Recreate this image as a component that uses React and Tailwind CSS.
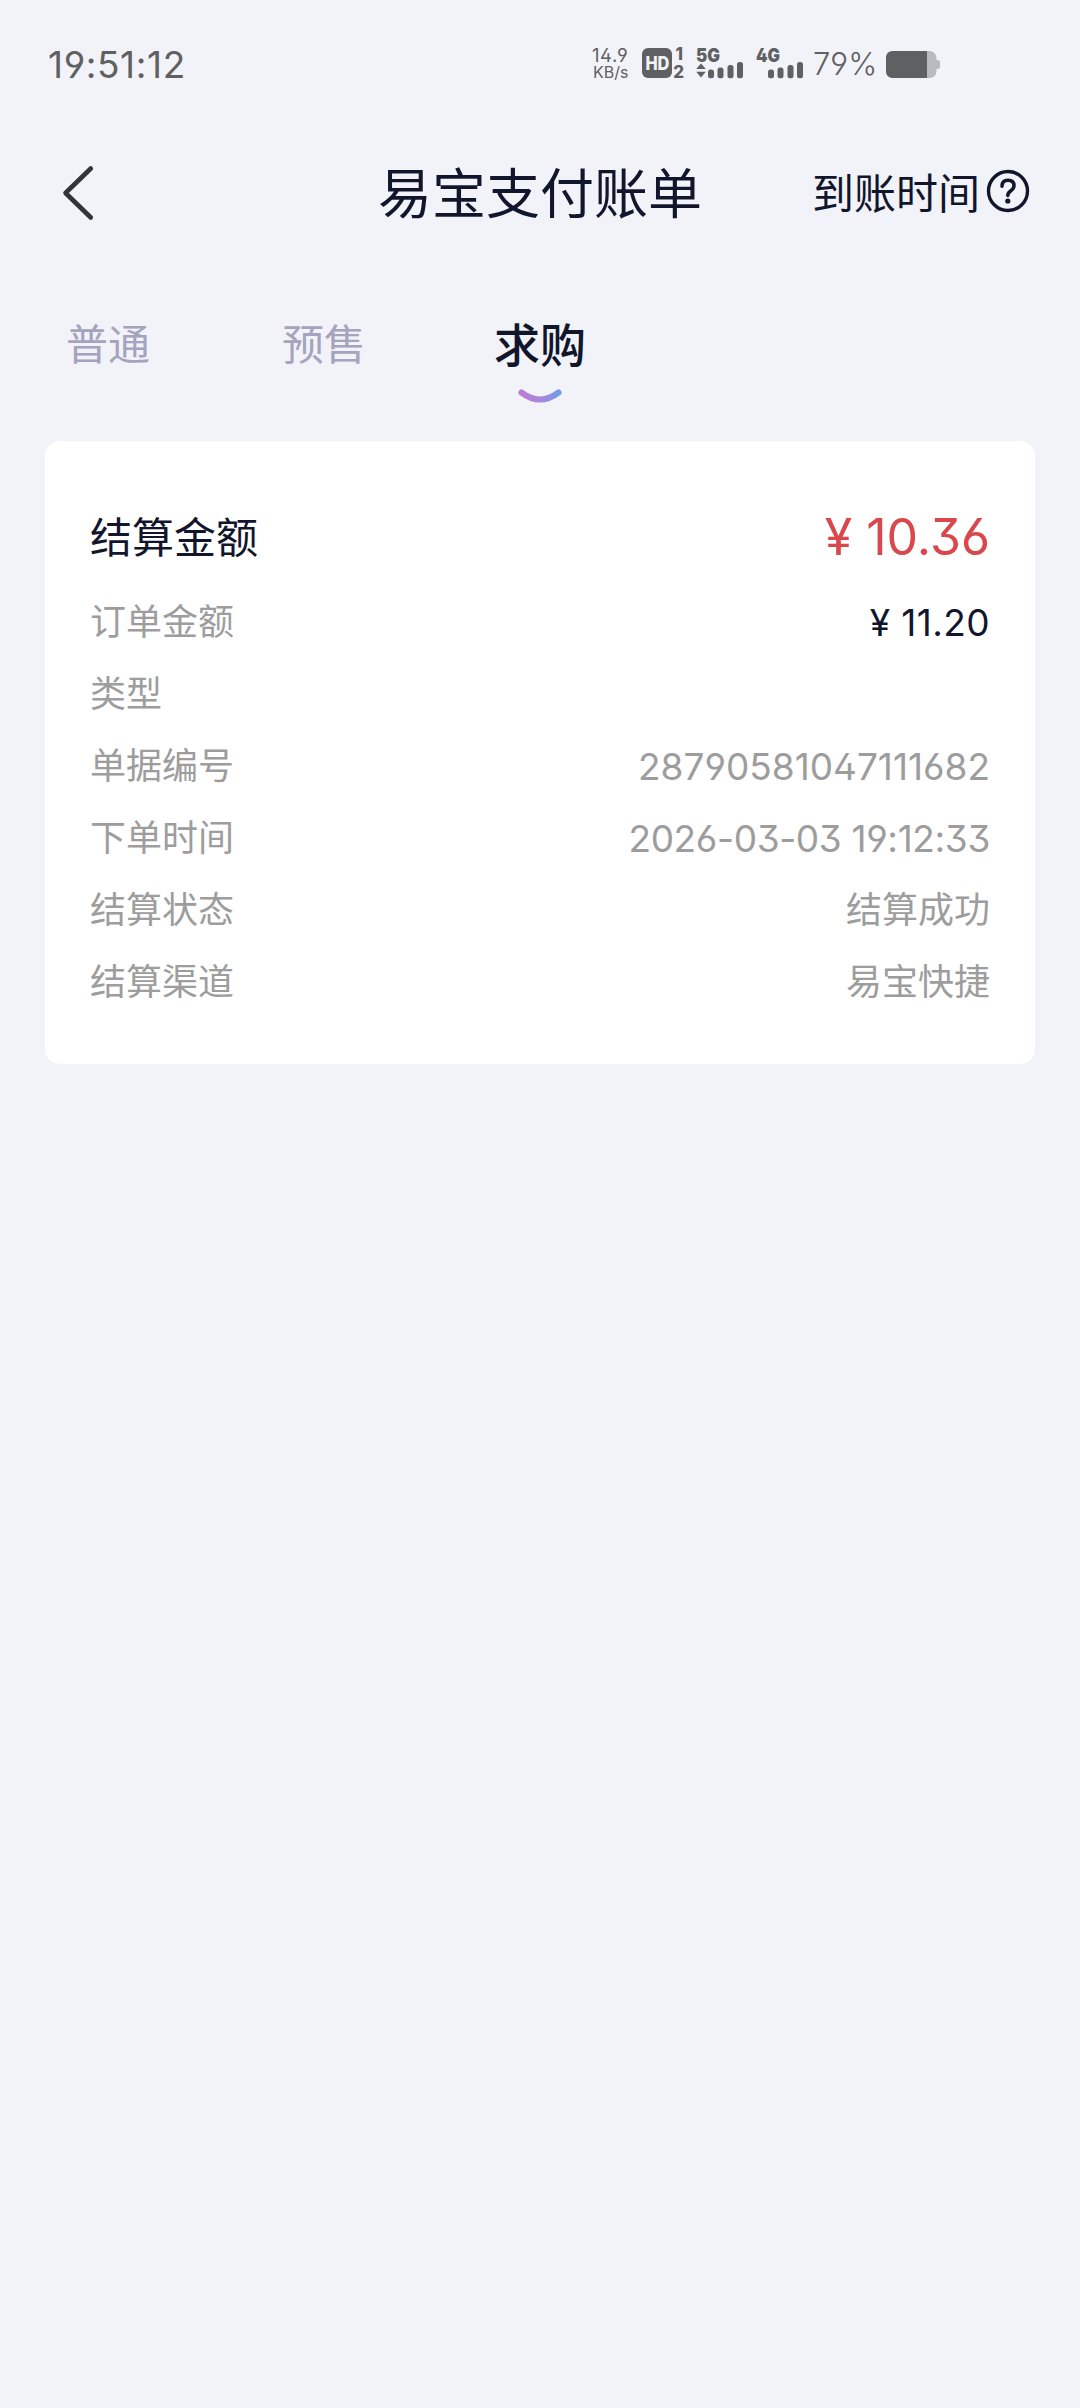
const cjk = "font-['Noto_Sans_CJK_SC',sans-serif]";
const num = "font-['Inter',sans-serif] [font-feature-settings:'ss01']";

function SignalBars({ label, arrows }) {
  return (
    <svg width="49" height="42" viewBox="0 -8 49 42" fill="#5f6062">
      <text x="0" y="14.8" fontFamily="Inter, sans-serif" fontWeight="900" fontSize="19" textLength="24" lengthAdjust="spacingAndGlyphs">{label}</text>
      {arrows && (
        <>
          <path d="M5 16.500l4.800 5.500H.2z" />
          <path d="M5 30.500l4.800-5.800H.2z" />
        </>
      )}
      <rect x="12" y="22.500" width="6" height="8.700" rx="2.500" />
      <rect x="21.500" y="20.500" width="6" height="10.700" rx="2.500" />
      <rect x="31.500" y="18" width="6" height="13.200" rx="2.500" />
      <rect x="41" y="15" width="6" height="16.200" rx="2.500" />
    </svg>
  );
}

function StatusBar() {
  return (
    <div className={`flex h-[130px] pl-[48px] text-[#5f6062] ${num}`}>
      <div className="mt-[42px] w-[544px] text-[37px] leading-[46px] tracking-[0.6px]">19:51:12</div>
      <div className="mt-[45px] w-[50px]">
        <div className="text-[18.500px] leading-[20px] tracking-[0.6px]">14.9</div>
        <div className="pl-[1px] text-[16px] leading-[15px]">KB/s</div>
      </div>
      <svg className="mt-[39px]" width="54" height="42" viewBox="0 -8 54 42" fill="#5f6062">
        <rect x="0" y="1" width="30" height="30" rx="6" />
        <text x="3.400" y="22.900" fill="#f2f3f8" fontFamily="Inter, sans-serif" fontWeight="800" fontSize="18.5" textLength="24" lengthAdjust="spacingAndGlyphs">HD</text>
        <text x="33.500" y="13.300" fontFamily="Inter, sans-serif" fontWeight="800" fontSize="17">1</text>
        <text x="31.200" y="31" fontFamily="Inter, sans-serif" fontWeight="800" fontSize="17">2</text>
      </svg>
      <div className="mt-[39px] flex gap-[11px]">
        <SignalBars label="5G" arrows />
        <SignalBars label="4G" />
      </div>
      <div className="mt-[42px] ml-[8px] w-[73px] text-[31px] leading-[44px] font-light">79%</div>
      <svg className="mt-[50px]" width="56" height="30" viewBox="0 0 56 30">
        <rect x="0" y="1" width="50.500" height="27" rx="7" fill="#b9babf" />
        <path d="M50 10h1.500q2.500 0 2.500 2.500v4q0 2.500-2.500 2.500H50z" fill="#b9babf" />
        <path d="M7 1h34v27H7q-7 0-7-7V8q0-7 7-7z" fill="#5f6062" />
      </svg>
    </div>
  );
}

function Header() {
  return (
    <div className="flex h-[126px] items-center pr-[50px] pl-[60px] text-[#11162d]">
      <div className="flex w-[318px]">
        <svg width="36" height="56" viewBox="0 0 36 56" fill="none" stroke="#333437" strokeWidth="4.600" strokeLinecap="round" strokeLinejoin="round">
          <path d="M30.800 3.500L5.500 28l25.300 24.500" />
        </svg>
      </div>
      <h1 className="-mt-[4px] text-[54px] leading-[64px] font-normal">易宝支付账单</h1>
      <div className="-mt-[4px] ml-auto flex items-center gap-[6px] text-[42px] leading-[60px]">
        <span>到账时间</span>
        <svg width="44" height="44" viewBox="0 0 44 44" fill="none" stroke="#11162d">
          <circle cx="22" cy="22" r="19.500" strokeWidth="3.400" />
          <path d="M16 17.200q0-6 6-6t6 5.500q0 2.700-3.400 5.300-2.800 2-2.800 4.500" strokeWidth="3.500" strokeLinecap="round" />
          <circle cx="21.800" cy="32" r="2.600" fill="#11162d" stroke="none" />
        </svg>
      </div>
    </div>
  );
}

function Tabs() {
  return (
    <div className="flex h-[185px] pt-[52px] text-center text-[42px] leading-[68px] text-[#a5a3bd]">
      <div className="w-[216px]">普通</div>
      <div className="w-[216px]">预售</div>
      <div className="flex w-[216px] flex-col items-center text-[46px] font-medium text-[#11162d]">
        <span>求购</span>
        <svg className="mt-[11px]" width="46" height="18" viewBox="0 0 46 18" fill="none">
          <defs>
            <linearGradient id="smile" gradientUnits="userSpaceOnUse" x1="2" y1="0" x2="44" y2="0">
              <stop offset="0" stopColor="#bb7dd6" />
              <stop offset="0.500" stopColor="#a985dc" />
              <stop offset="1" stopColor="#729ceb" />
            </linearGradient>
          </defs>
          <path d="M4.500 5.500Q23 19.500 41.500 5.500" stroke="url(#smile)" strokeWidth="6" strokeLinecap="round" />
        </svg>
      </div>
    </div>
  );
}

const rows = [
  { label: "订单金额", value: "¥ 11.20", style: "text-[#11162d] tracking-[0.4px]", numeric: true },
  { label: "类型", value: "" },
  { label: "单据编号", value: "28790581047111682", style: "", numeric: true },
  { label: "下单时间", value: "2026-03-03 19:12:33", style: "tracking-[-0.36px]", numeric: true },
  { label: "结算状态", value: "结算成功" },
  { label: "结算渠道", value: "易宝快捷" },
];

function Bill() {
  return (
    <section className="mx-[45px] h-[623px] rounded-[15px] bg-white px-[45px] pt-[47px]">
      <div className="flex h-[98px] items-center justify-between">
        <span className="-mt-[5px] text-[42px] text-[#11162d]">结算金额</span>
        <span className={`text-[50px] text-[#d9484d] ${num}`}>¥ 10.36</span>
      </div>
      {rows.map((r) => (
        <div key={r.label} className="flex h-[72px] items-center justify-between text-[36px] text-[#9d9d9d]">
          <span className="-mt-[6px]">{r.label}</span>
          <span className={r.numeric ? `mt-[2px] text-[37px] ${r.style} ${num}` : "-mt-[6px]"}>{r.value}</span>
        </div>
      ))}
    </section>
  );
}

export default function App() {
  return (
    <main className={`h-[2408px] w-[1080px] overflow-hidden bg-[#f2f3f8] ${cjk}`}>
      <StatusBar />
      <Header />
      <Tabs />
      <Bill />
    </main>
  );
}
